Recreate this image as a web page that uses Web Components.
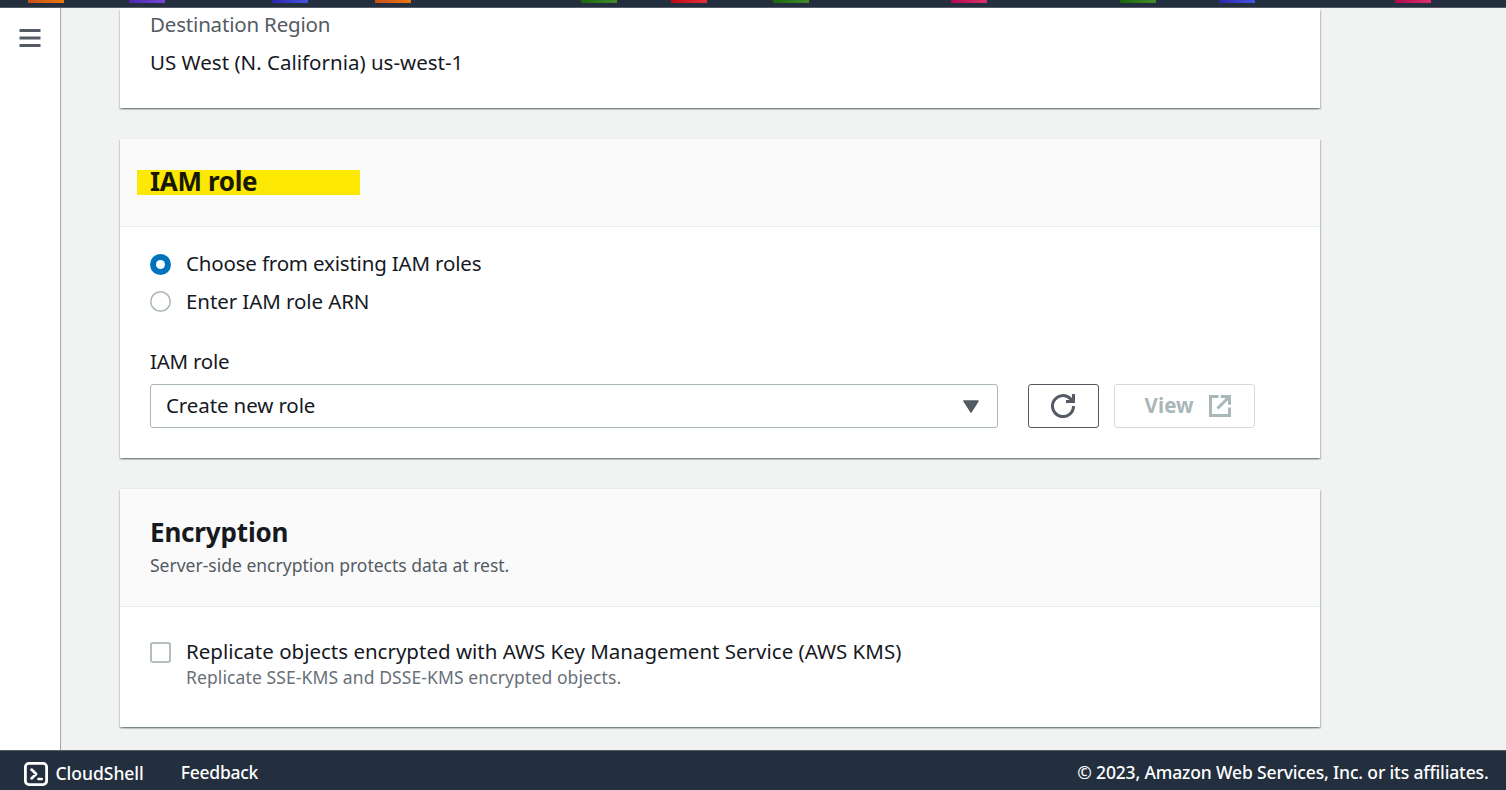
<!DOCTYPE html>
<html lang="en">
<head>
<meta charset="utf-8">
<title>Create replication rule</title>
<style>
html,body{margin:0;height:100%;overflow:hidden;background:#f1f3f3}
body{font-family:"Noto Sans","Open Sans",sans-serif;font-size:20.5px;color:#16191f}
</style>
</head>
<body>
<console-page></console-page>
<script>
const define = (name, html, setup) => {
  const t = document.createElement('template');
  t.innerHTML = html;
  customElements.define(name, class extends HTMLElement {
    constructor() {
      super();
      this.attachShadow({mode: 'open'}).appendChild(t.content.cloneNode(true));
    }
    connectedCallback() { if (setup) setup(this, this.shadowRoot); }
  });
};

/* One line of text, tracked so that it takes exactly `w` pixels. */
define('text-line', `
<style>
:host{display:block;white-space:nowrap;line-height:30px;height:30px}
:host([kind=heading]){font-size:26px;font-weight:700}
:host([kind=small]){font-size:17.5px;color:#545b64}
:host([kind=hint]){font-size:17.5px;color:#687078}
:host([kind=muted]){color:#545b64}
:host([kind=footer]){font-size:17.5px;font-weight:500;color:#fff}
:host([kind=button]){font-weight:700;color:#aab7b8}
span{display:inline-block}
</style><span><slot></slot></span>`, (host, root) => {
  const s = root.querySelector('span');
  s.style.letterSpacing = '0px';
  const w = s.getBoundingClientRect().width;
  const n = host.textContent.length;
  s.style.letterSpacing = ((+host.getAttribute('w') + .3 - w) / n).toFixed(3) + 'px';
});

define('service-tab', `
<style>:host{display:block;flex:none;width:36px;height:3px;background:linear-gradient(90deg,var(--a),var(--b))}</style>`);

define('top-bar', `
<style>
:host{display:flex;flex:none;height:7px;background:#232f3e;border-bottom:1px solid #545b64;align-items:flex-start}
.o{--a:#c8511b;--b:#e8770d}.p{--a:#4d27aa;--b:#7845d8}.b{--a:#2e27ad;--b:#4355dd}
.g{--a:#1b660f;--b:#448c27}.r{--a:#bd0816;--b:#e5303a}.k{--a:#b0084d;--b:#e02f70}
</style>
<service-tab class="o" style="margin-left:28px"></service-tab>
<service-tab class="p" style="margin-left:65px"></service-tab>
<service-tab class="b" style="margin-left:107px"></service-tab>
<service-tab class="o" style="margin-left:67px"></service-tab>
<service-tab class="g" style="margin-left:170px"></service-tab>
<service-tab class="r" style="margin-left:54px"></service-tab>
<service-tab class="g" style="margin-left:66px"></service-tab>
<service-tab class="k" style="margin-left:142px"></service-tab>
<service-tab class="g" style="margin-left:133px"></service-tab>
<service-tab class="b" style="margin-left:63px"></service-tab>
<service-tab class="k" style="margin-left:140px"></service-tab>`);

define('side-rail', `
<style>
:host{display:block;flex:none;box-sizing:border-box;width:60px;background:#fff;padding:21px 0 0 19px;box-shadow:1px 0 0 rgba(0,28,36,.2),1px 0 1px rgba(0,28,36,.15)}
svg{display:block}
</style>
<svg width="22" height="18" viewBox="0 0 22 18"><path d="M.5 1.5h21M.5 9h21M.5 16.5h21" stroke="#545b64" stroke-width="3"/></svg>`);

define('panel-card', `
<style>
:host{display:block;flex:none;box-sizing:border-box;width:1200px;background:#fff;border-top:1px solid #eaeded;box-shadow:0 1.5px 1.5px rgba(0,28,36,.3),1.5px 1.5px 1.5px rgba(0,28,36,.15),-1.5px 1.5px 1.5px rgba(0,28,36,.15)}
:host([plain]){border-top:0}
header{background:#fafafa;border-bottom:1px solid #eaeded;padding:28px 30px}
:host([plain]) header{display:none}
section{padding:0 30px}
</style>
<header><slot name="head"></slot></header><section><slot></slot></section>`);

define('marked-title', `
<style>
:host{display:block;position:relative;isolation:isolate;color:#181900}
i{position:absolute;z-index:-1;left:-13px;top:3px;width:223px;height:25px;background:#fce803}
</style><i></i><slot></slot>`);

define('radio-option', `
<style>
:host{display:flex;align-items:center;height:38px;gap:15px}
svg{display:block;flex:none;margin-top:-3px}
.on{display:none}:host([checked]) .on{display:block}:host([checked]) .off{display:none}
:host([checked]) svg{margin-top:-1px}
slot{display:block;margin-top:-4px}
</style>
<svg width="21" height="21" viewBox="0 0 21 21">
<circle class="off" cx="10.5" cy="10.5" r="9.75" fill="#fff" stroke="#aab7b8" stroke-width="1.5"/>
<g class="on"><circle cx="10.5" cy="10.5" r="10.5" fill="#0073bb"/><circle cx="10.5" cy="10.5" r="4.5" fill="#fff"/></g></svg>
<slot></slot>`);

define('select-box', `
<style>
:host{display:flex;box-sizing:border-box;width:848px;height:44px;border:1px solid #aab7b8;border-radius:3px;padding:0 18px 0 15px;align-items:center;justify-content:space-between}
slot{display:block;margin-top:-2px}
</style><slot></slot>
<svg width="16" height="13" viewBox="0 0 16 13"><path d="M1 1h14L8 12z" fill="#545b64" stroke="#545b64" stroke-width="1.5" stroke-linejoin="round"/></svg>`);

define('icon-button', `
<style>
:host{display:flex;box-sizing:border-box;height:44px;border:1px solid #545b64;border-radius:3px;align-items:center}
:host([disabled]){border-color:#d5dbdb}
</style><slot></slot>`);

define('refresh-icon', `
<style>:host,svg{display:block}</style>
<svg width="24" height="24" viewBox="0 0 24 24" fill="none" stroke="#545b64" stroke-width="3"><path d="M22.5 12A10.5 10.5 0 1 1 19.4 4.6L22 7"/><path d="M22.5 0v7.5H15"/></svg>`);

define('external-icon', `
<style>:host,svg{display:block}</style>
<svg width="22" height="22" viewBox="0 0 22 22" fill="none" stroke="#aab7b8" stroke-width="3"><path d="M9.5 1.5h-8v19h19v-8"/><path d="M11.7 1.5h8.8v8.3M20 2 8.5 13.5"/></svg>`);

define('check-option', `
<style>
:host{display:flex;gap:15px;align-items:flex-start}
b{display:block;flex:none;box-sizing:border-box;width:21px;height:21px;border:2px solid #b2bebf;border-radius:3px;margin-top:6px}
</style><b></b><div><slot></slot></div>`);

define('page-footer', `
<style>
:host{display:flex;flex:none;box-sizing:border-box;height:40px;background:#232f3e;border-top:1px solid #545b64;padding:6px 17.5px 0 24px;align-items:flex-start}
svg{display:block;margin:5px 7.5px 0 0}
.fb{margin-left:37px}.cs{margin-top:1px}.cr{margin-left:auto}
</style>
<svg width="24" height="24" viewBox="0 0 24 24" fill="none" stroke="#fff" stroke-linecap="round" stroke-linejoin="round"><rect x="1.4" y="1.4" width="21.2" height="21.2" rx="3.5" stroke-width="2.8"/><path d="M7.5 7.6l4.6 4.4-4.6 4.4M14.5 17h3.2" stroke-width="2.7"/></svg>
<text-line class="cs" kind="footer" w="88">CloudShell</text-line>
<text-line class="fb" kind="footer" w="77">Feedback</text-line>
<text-line class="cr" kind="footer" w="411">© 2023, Amazon Web Services, Inc. or its affiliates.</text-line>`);

define('console-page', `
<style>
:host{display:flex;flex-direction:column;height:790px}
.mid{display:flex;flex:1;min-height:0}
main{display:flex;flex-direction:column;gap:30px;padding-left:60px}
.dest{height:100px}.role{height:320px}.enc{height:239px}
.dest text-line+text-line{margin-top:8px}
.radios{padding-top:19px}
.label{margin-top:24px}
.row{display:flex;margin-top:8px}
.refresh{width:71px;margin-left:30px;padding-left:22px}
.view{width:141px;margin-left:15px;padding-left:29.5px;gap:15px}
</style>
<top-bar></top-bar>
<div class="mid">
<side-rail></side-rail>
<main>
<panel-card class="dest" plain>
<text-line kind="muted" w="180" style="padding-top:1px">Destination Region</text-line>
<text-line w="313">US West (N. California) us-west-1</text-line>
</panel-card>
<panel-card class="role">
<marked-title slot="head" style="height:31px"><text-line kind="heading" w="107" style="position:relative;top:-1px">IAM role</text-line></marked-title>
<div class="radios">
<radio-option checked><text-line w="295">Choose from existing IAM roles</text-line></radio-option>
<radio-option><text-line w="183">Enter IAM role ARN</text-line></radio-option>
</div>
<text-line class="label" w="79">IAM role</text-line>
<div class="row">
<select-box><text-line w="149">Create new role</text-line></select-box>
<icon-button class="refresh"><refresh-icon></refresh-icon></icon-button>
<icon-button class="view" disabled><text-line kind="button" w="49" style="margin-top:-2px">View</text-line><external-icon></external-icon></icon-button>
</div>
</panel-card>
<panel-card class="enc">
<div slot="head" style="height:61px"><text-line kind="heading" w="138">Encryption</text-line><text-line kind="small" w="359" style="margin-top:3px">Server-side encryption protects data at rest.</text-line></div>
<check-option style="padding-top:29px"><text-line w="715">Replicate objects encrypted with AWS Key Management Service (AWS KMS)</text-line><text-line kind="hint" w="435" style="margin-top:-4px">Replicate SSE-KMS and DSSE-KMS encrypted objects.</text-line></check-option>
</panel-card>
</main>
</div>
<page-footer></page-footer>`);
</script>
</body>
</html>
